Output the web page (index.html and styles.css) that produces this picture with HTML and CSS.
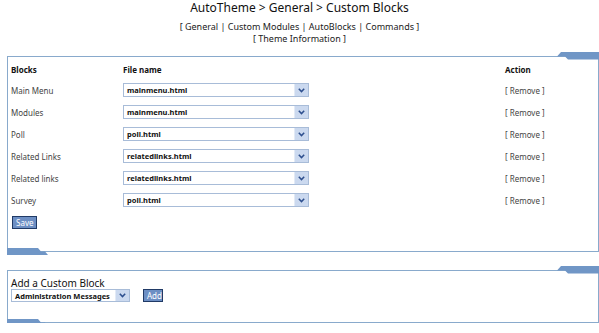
FILE: index.html
```html
<!DOCTYPE html>
<html lang="en">
<head>
  <meta charset="UTF-8" />
  <title>AutoTheme - Custom Blocks</title>
  <link rel="stylesheet" href="styles.css">
</head>
<body>
  <h1 class="title">AutoTheme &gt; General &gt; Custom Blocks</h1>
  <div class="links">
    [ General | Custom Modules | AutoBlocks | Commands ]<br>
    [ Theme Information ]
  </div>

  <!-- Existing custom blocks -->
  <div class="panel blocks-panel">
    <svg class="tab tab-top" width="42" height="8" viewBox="0 0 42 8"><polygon points="0,4.5 4,0 42,0 42,7.5 11,7.5 8,4.5" /></svg>
    <div class="grid">
      <div class="head">Blocks</div>
      <div class="head">File name</div>
      <div class="head">Action</div>

      <div class="cell">Main Menu</div>
      <div class="cell"><div class="select wide"><span class="val">mainmenu.html</span><span class="arrow"><svg width="7" height="5" viewBox="0 0 7 5"><polyline points="0.8,0.8 3.5,3.6 6.2,0.8" /></svg></span></div></div>
      <div class="cell">[ Remove ]</div>

      <div class="cell">Modules</div>
      <div class="cell"><div class="select wide"><span class="val">mainmenu.html</span><span class="arrow"><svg width="7" height="5" viewBox="0 0 7 5"><polyline points="0.8,0.8 3.5,3.6 6.2,0.8" /></svg></span></div></div>
      <div class="cell">[ Remove ]</div>

      <div class="cell">Poll</div>
      <div class="cell"><div class="select wide"><span class="val">poll.html</span><span class="arrow"><svg width="7" height="5" viewBox="0 0 7 5"><polyline points="0.8,0.8 3.5,3.6 6.2,0.8" /></svg></span></div></div>
      <div class="cell">[ Remove ]</div>

      <div class="cell">Related Links</div>
      <div class="cell"><div class="select wide"><span class="val">relatedlinks.html</span><span class="arrow"><svg width="7" height="5" viewBox="0 0 7 5"><polyline points="0.8,0.8 3.5,3.6 6.2,0.8" /></svg></span></div></div>
      <div class="cell">[ Remove ]</div>

      <div class="cell">Related links</div>
      <div class="cell"><div class="select wide"><span class="val">relatedlinks.html</span><span class="arrow"><svg width="7" height="5" viewBox="0 0 7 5"><polyline points="0.8,0.8 3.5,3.6 6.2,0.8" /></svg></span></div></div>
      <div class="cell">[ Remove ]</div>

      <div class="cell">Survey</div>
      <div class="cell"><div class="select wide"><span class="val">poll.html</span><span class="arrow"><svg width="7" height="5" viewBox="0 0 7 5"><polyline points="0.8,0.8 3.5,3.6 6.2,0.8" /></svg></span></div></div>
      <div class="cell">[ Remove ]</div>
    </div>
    <button class="btn save">Save</button>
    <svg class="tab tab-bottom" width="42" height="7" viewBox="0 0 42 7"><polygon points="0,0 31,0 34,3.5 38,3.5 41,7 0,7" /></svg>
  </div>

  <!-- Add a new one -->
  <div class="panel add-panel">
    <svg class="tab tab-top" width="42" height="8" viewBox="0 0 42 8"><polygon points="0,4.5 4,0 42,0 42,7.5 11,7.5 8,4.5" /></svg>
    <div class="add-title">Add a Custom Block</div>
    <div class="add-row">
      <div class="select narrow"><span class="val">Administration Messages</span><span class="arrow"><svg width="7" height="5" viewBox="0 0 7 5"><polyline points="0.8,0.8 3.5,3.6 6.2,0.8" /></svg></span></div>
      <button class="btn add">Add</button>
    </div>
    <svg class="tab tab-bottom" width="42" height="7" viewBox="0 0 42 7"><polygon points="0,0 31,0 34,3.5 38,3.5 41,7 0,7" /></svg>
  </div>
</body>
</html>
```

FILE: styles.css
```css
body {
  margin: 0;
  font-family: "Noto Sans", "DejaVu Sans", sans-serif;
  color: #333;
  background: #fff;
}

.title {
  margin: 0;
  padding-top: 1px;
  font-size: 12px;
  line-height: 13px;
  font-weight: normal;
  color: #111;
  text-align: center;
}

.links {
  margin-top: 7px;
  font-size: 9px;
  line-height: 12px;
  text-align: center;
  color: #222;
}

.panel {
  position: relative;
  margin: 0 0 0 7px;
  border: 1px solid #89aacc;
}

.blocks-panel {
  margin-top: 11px;
  padding: 2px 0 22px 3px;
}

.add-panel {
  margin-top: 18px;
  padding: 7px 0 20px 3px;
}

.tab {
  position: absolute;
  fill: #7096c6;
}

.tab-top {
  top: -5px;
  right: -1px;
}

.tab-bottom {
  bottom: -4px;
  left: -1px;
}

.grid {
  display: grid;
  grid-template-columns: 112px 382px auto;
  grid-template-rows: 20px;
  grid-auto-rows: 22px;
  font-size: 8px;
}

.head {
  display: flex;
  align-items: center;
  font-weight: bold;
  color: #111;
}

.cell {
  display: flex;
  align-items: center;
  color: #444;
}

.select {
  display: flex;
  align-items: center;
  box-sizing: border-box;
  border: 1px solid #a8bcd8;
  background: #fff;
  color: #111;
  font-size: 7.5px;
  font-weight: bold;
}

.select.wide {
  width: 186px;
  height: 14px;
}

.select.narrow {
  width: 119px;
  height: 13px;
}

.val {
  flex: 1;
  padding-left: 3px;
  white-space: nowrap;
  overflow: hidden;
}

.arrow {
  width: 13px;
  height: 100%;
  display: flex;
  align-items: center;
  justify-content: center;
  background: #cbd9ef;
  border-left: 1px solid #e2eaf6;
}

.arrow polyline {
  fill: none;
  stroke: #2d4f8e;
  stroke-width: 1.5;
}

.btn {
  box-sizing: border-box;
  height: 13px;
  padding: 0 3px;
  border: 1px solid #203a66;
  background: #6d8fc4;
  color: #fff;
  font-family: "Noto Sans", "DejaVu Sans", sans-serif;
  font-size: 8px;
  line-height: 11px;
}

.save {
  display: block;
  width: 25px;
  margin: 5px 0 0 1px;
}

.add-title {
  font-size: 10px;
  line-height: 11px;
  color: #111;
}

.add-row {
  display: flex;
  align-items: center;
}

.add {
  width: 20px;
  margin-left: 13px;
}
```
